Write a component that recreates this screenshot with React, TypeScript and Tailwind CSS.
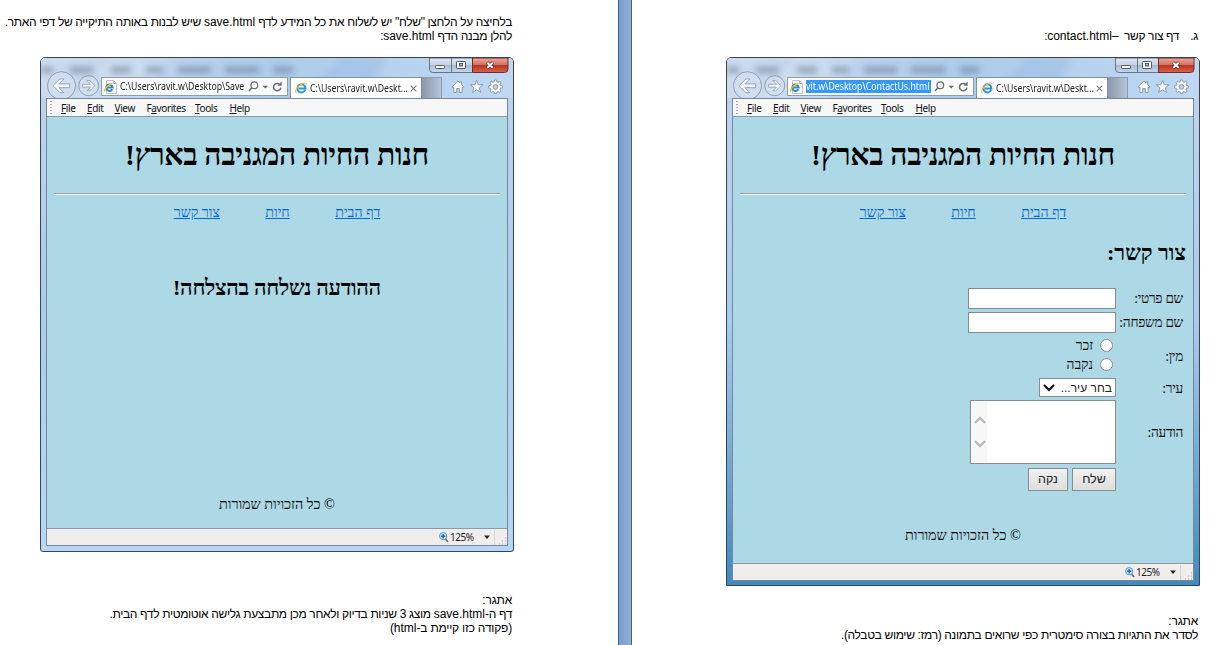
import type { ReactNode } from "react";

const ui = "font-['Noto_Sans','Open_Sans',sans-serif]";
const serif = "font-['Liberation_Serif',serif]";

function IeLogo({ size }: { size: number }) {
  return (
    <svg width={size} height={size} viewBox="0 0 16 16" className="shrink-0">
      <path d="M13.6 10.6A5.4 5.4 0 1 1 14 8.6H5.2" fill="none" stroke="#2593dc" strokeWidth="2.6" />
      <path d="M1.6 14.6C-.6 12.2 3 6.2 8.2 3 11.6.8 15.2.4 15 3.4" fill="none" stroke="#f2bd2c" strokeWidth="1.5" />
    </svg>
  );
}

function PageIcon() {
  return (
    <svg width="13" height="14" viewBox="0 0 13 14" className="shrink-0">
      <path d="M2.5.5h7l3 3v10h-10z" fill="#fff" stroke="#c2c2c2" />
      <path d="M9.5.5v3h3" fill="none" stroke="#b5b5b5" />
      <path d="M8.3 9.3A3.2 3.2 0 1 1 8.7 7.6H2.8" fill="none" stroke="#2089d8" strokeWidth="2" />
      <path d="M.8 11.5C0 9 3.5 5 8.5 3.8" fill="none" stroke="#f0b92a" strokeWidth="1.4" />
    </svg>
  );
}

function NavButtons() {
  return (
    <svg width="54" height="27" viewBox="0 0 54 27" className="shrink-0">
      <circle cx="15.5" cy="14.7" r="14" fill="#d5e2f2" fillOpacity=".55" stroke="#8f9db0" />
      <path d="M7 14.7l7-6.8h3.8l-4.9 5h10.8v3.8H12.9l4.9 5H14z" fill="#f5f9fd" stroke="#8f9db0" strokeWidth=".9" />
      <circle cx="42.7" cy="14.7" r="10" fill="#d5e2f2" fillOpacity=".55" stroke="#8f9db0" />
      <path d="M49 14.7l-5.3-5.2h-2.8l3.7 3.8h-8v2.8h8l-3.7 3.8h2.8z" fill="#f5f9fd" stroke="#8f9db0" strokeWidth=".8" />
    </svg>
  );
}

function AddressTools() {
  return (
    <svg width="36" height="16" viewBox="0 0 36 16" className="shrink-0">
      <g fill="none" stroke="#6b6b6b">
        <circle cx="6.3" cy="6.2" r="3.4" strokeWidth="1.2" />
        <path d="M3.8 8.8L1 12" strokeWidth="1.5" />
        <path d="M31.5 5.2A3.7 3.7 0 1 0 32.9 8.6" strokeWidth="1.5" />
      </g>
      <path d="M14.5 6.8h5.5l-2.7 2.8z" fill="#666" />
      <path d="M33.7 2.5v4.2h-4.2z" fill="#6b6b6b" />
    </svg>
  );
}

function ToolIcons() {
  return (
    <svg width="54" height="16" viewBox="0 0 54 16" className="shrink-0">
      <g fill="#fafcfe" stroke="#8292a8" strokeWidth=".9" strokeLinejoin="round">
        <path d="M1 8.1L7 2l2 2V2.6h1.7v3.1L13 8.1l-1 1-.9-.8V13.4H8.3V9.5H5.7v3.9H2.9V8.3l-.9.8z" />
        <path d="M25.6 1.3l1.7 4.4 4.6.2-3.6 2.9 1.3 4.6-4-2.6-4 2.6 1.3-4.6-3.6-2.9 4.6-.2z" />
        <path d="M43.5 1h2l.4 1.8 1.2.5 1.6-1 1.4 1.4-1 1.6.5 1.2 1.8.4v2l-1.8.4-.5 1.2 1 1.6-1.4 1.4-1.6-1-1.2.5-.4 1.6h-2l-.4-1.6-1.2-.5-1.6 1-1.4-1.4 1-1.6-.5-1.2-1.8-.4v-2l1.8-.4.5-1.2-1-1.6 1.4-1.4 1.6 1 1.2-.5z" />
        <circle cx="44.5" cy="7.9" r="2.4" fill="#b9cfe8" />
      </g>
    </svg>
  );
}

function CaptionButtons() {
  return (
    <svg width="80" height="15" viewBox="0 0 80 15" className="absolute top-0 right-[4px]">
      <defs>
        <linearGradient id="glass" x1="0" y1="0" x2="0" y2="1">
          <stop offset="0" stopColor="#dde7f2" />
          <stop offset=".48" stopColor="#c5d3e4" />
          <stop offset=".5" stopColor="#a9bbd1" />
          <stop offset="1" stopColor="#c7d8ea" />
        </linearGradient>
        <linearGradient id="red" x1="0" y1="0" x2="0" y2="1">
          <stop offset="0" stopColor="#eba89b" />
          <stop offset=".48" stopColor="#d4705e" />
          <stop offset=".5" stopColor="#b83222" />
          <stop offset="1" stopColor="#d5664c" />
        </linearGradient>
      </defs>
      <path d="M.5 0H43.5V14.5H4Q.5 14.5.5 11z" fill="url(#glass)" stroke="#65758b" />
      <path d="M43.5 0h35.500v11q0 3.500-3.500 3.500H43.500z" fill="url(#red)" stroke="#6c2d30" />
      <path d="M22.500 0v14" stroke="#65758b" />
      <rect x="6.500" y="7.500" width="9" height="3" rx=".8" fill="#fff" stroke="#4e5969" />
      <rect x="27.500" y="3.500" width="9" height="7" rx=".8" fill="#fff" stroke="#4e5969" />
      <rect x="30.500" y="5.500" width="3" height="2.500" fill="#aebdd0" stroke="#4e5969" />
      <path d="M58 4.500l6 5.500m0-5.500l-6 5.500" stroke="#5b3038" strokeWidth="3.600" />
      <path d="M58.300 4.800l5.400 4.900m0-4.900l-5.400 4.900" stroke="#fff" strokeWidth="2" />
    </svg>
  );
}

function Backdrop() {
  const marks = [[0, 12], [29, 23], [70, 20], [105, 17], [137, 33], [184, 34], [233, 19]];
  return (
    <svg width="472" height="40" className="absolute top-0 left-0">
      <path d="M300 0h46l-26 41h-60z" fill="#7da5d2" opacity=".22" className="blur-[3px]" />
      <path d="M70 0h60l-30 41H30z" fill="#fff" opacity=".15" className="blur-[3px]" />
      {marks.map(([x, w]) => (
        <rect key={x} x={x} y="9" width={w} height="6" fill="#55657c" opacity=".5" className="blur-[3px]" />
      ))}
    </svg>
  );
}

const menus = [
  ["", "F", "ile", "w-[26px]"],
  ["", "E", "dit", "w-[27.5px]"],
  ["", "V", "iew", "w-[32px]"],
  ["F", "a", "vorites", "w-[48.5px]"],
  ["", "T", "ools", "w-[34.5px]"],
  ["", "H", "elp", "w-[30px]"],
];

interface BrowserProps {
  address: string;
  selected?: boolean;
  children: ReactNode;
  frame: string;
}

function Browser({ address, selected, children, frame }: BrowserProps) {
  return (
    <div dir="ltr" className={`relative flex w-[474px] flex-col overflow-hidden rounded-t-[5px] border border-[#39424e] ${frame}`}>
      <div className="relative h-[40px] shrink-0 bg-linear-to-r from-[#ccdcee] via-[#adcbeb] to-[#c0d8f1]">
        <Backdrop />
        <CaptionButtons />
        <div className="relative flex h-full items-end pl-[5px]">
          <NavButtons />
          <div className="mb-[2px] ml-[1px] flex h-[19px] w-[187px] items-center border border-[#8e9db0] bg-[#fafcfe] pl-[2px]">
            <PageIcon />
            <span className={`${ui} ml-[3px] w-[125px] shrink-0 text-[10.5px] leading-[13px] whitespace-nowrap ${selected ? "bg-[#3399ff] text-white" : "text-[#222]"}`}>
              <span className={`inline-block w-max origin-left ${selected ? "scale-x-[0.835]" : "scale-x-[0.83]"}`}>{address}</span>
            </span>
            <span className="ml-[3px]"><AddressTools /></span>
          </div>
          <div className="ml-[2px] flex h-[21px] w-[132px] items-center border-x border-t border-[#8090a5] bg-white pl-[4px]">
            <IeLogo size={12} />
            <span className={`${ui} ml-[3px] w-[98px] shrink-0 text-[10.5px] leading-[13px] whitespace-nowrap text-[#222]`}>
              <span className="inline-block w-max origin-left scale-x-[0.825]">C:\Users\ravit.w\Deskt...</span>
            </span>
            <svg width="7" height="7" viewBox="0 0 7 7" className="ml-[2px] shrink-0">
              <path d="M.7.7l5.600 5.600m0-5.600L.7 6.300" stroke="#777" strokeWidth="1.100" />
            </svg>
          </div>
          <div className="h-[21px] w-[20px] border-t border-r border-[#8b9cb2] bg-linear-to-r from-[#8998aa] to-[#b5c5d6]" />
          <div className="mb-[3px] ml-[9px] flex"><ToolIcons /></div>
        </div>
      </div>
      <div className="mx-[5px] flex min-h-0 flex-1 flex-col border border-[#77889a]">
        <div className={`${ui} flex h-[18px] shrink-0 items-center border-b border-[#8a9aa5] bg-[#f7f7f7] pl-[3px] text-[10px] leading-[14px] text-[#111]`}>
          <svg width="2" height="13" className="mr-[9px]"><path d="M1 0v13" stroke="#aaa" strokeWidth="2" strokeDasharray="1 2" /></svg>
          <div className="flex tracking-[-0.38px]">
            {menus.map(([a, key, b, w]) => (
              <span key={key} className={`${w} whitespace-nowrap`}>
                {a}<u className="underline-offset-1">{key}</u>{b}
              </span>
            ))}
          </div>
        </div>
        <div dir="rtl" className={`${serif} flex min-h-0 flex-1 flex-col bg-[#add8e6] px-[7px] text-[14px] text-black`}>
          <div className="h-[77px] shrink-0 border-b border-[#a0a0a0] pt-[19px] text-center text-[30px] leading-[38px] font-bold tracking-[-0.39px] whitespace-nowrap shadow-[0_1px_0_#f3f3f3]">
            חנות החיות המגניבה בארץ!
          </div>
          <div className="flex h-[36px] shrink-0 items-center justify-center gap-[45.5px] text-[14.2px] text-[#0066cc] underline">
            <span>דף הבית</span><span>חיות</span><span>צור קשר</span>
          </div>
          {children}
        </div>
        <div className={`${ui} flex h-[17px] shrink-0 items-center justify-end border-t border-[#8b9aa3] bg-[#f1eded] text-[10.5px] text-[#222]`}>
          <svg width="10" height="11" viewBox="0 0 10 11" className="mr-px">
            <path d="M6.500 7l2.500 3" stroke="#9b6138" strokeWidth="1.800" />
            <circle cx="4.200" cy="4.200" r="3.600" fill="#d7efff" stroke="#4a94cc" />
            <path d="M2 4.200h4.400M4.200 2v4.400" stroke="#1465bd" strokeWidth="1.400" />
          </svg>
          <span className="w-[24px] text-[10px] tracking-[-0.5px]">125%</span>
          <svg width="33" height="16" viewBox="0 0 33 16">
            <path d="M10 6.500h6l-3 3.500z" fill="#222" />
            <path d="M20.500 1v15" stroke="#d8d4d4" />
            <path d="M31 9h1M28 12h1m2 0h1M25 15h1m2 0h1m2 0h1" stroke="#aaa" />
          </svg>
        </div>
      </div>
      <div className={selected ? "h-[4px] shrink-0" : "h-[5px] shrink-0"} />
    </div>
  );
}

function Row({ label, height, children }: { label: string; height: string; children: ReactNode }) {
  return (
    <div className={`flex ${height} shrink-0 items-center`}>
      <div className="w-[67px] shrink-0 pt-[2px] text-[13.6px] tracking-[-0.25px] whitespace-nowrap">{label}</div>
      {children}
    </div>
  );
}

function ContactForm() {
  return (
    <div className="flex flex-col pr-[3px]">
      <Row label="שם פרטי:" height="h-[24px]"><div className="h-[21px] w-[148px] border border-[#858d94] bg-white" /></Row>
      <Row label="שם משפחה:" height="h-[24px]"><div className="h-[21px] w-[148px] border border-[#858d94] bg-white" /></Row>
      <Row label="מין:" height="h-[43px]">
        <div className="flex flex-col pr-[3px] pb-[2px]">
          {["זכר", "נקבה"].map((name) => (
            <div key={name} className="flex h-[19px] items-center gap-[7px]">
              <div className="size-[13px] rounded-full border border-[#858d94] bg-white" />
              <span className="pt-[2px] text-[13.8px]">{name}</span>
            </div>
          ))}
        </div>
      </Row>
      <Row label="עיר:" height="h-[21px]">
        <div className="flex h-[19px] w-[77px] items-center justify-between border border-[#858d94] bg-white px-[3px] font-['Liberation_Sans',sans-serif] text-[12px] text-[#222]">
          <span className="whitespace-nowrap">בחר עיר...</span>
          <svg width="12" height="8" viewBox="0 0 12 8"><path d="M1 1l5 5 5-5" fill="none" stroke="#111" strokeWidth="2.200" /></svg>
        </div>
      </Row>
      <Row label="הודעה:" height="h-[68px]">
        <div className="flex h-[64px] w-[146px] justify-end border border-[#858d94] bg-white">
          <div className="m-[1px] flex w-[15px] flex-col items-center gap-[14px] bg-[#f7f7f7] pt-[14px]">
            <svg width="12" height="9" viewBox="0 0 12 9"><path d="M1 7l5-5 5 5" fill="none" stroke="#bababa" strokeWidth="2.400" /></svg>
            <svg width="12" height="9" viewBox="0 0 12 9"><path d="M1 2l5 5 5-5" fill="none" stroke="#bababa" strokeWidth="2.400" /></svg>
          </div>
        </div>
      </Row>
      <div className="mt-px flex h-[24px] items-center gap-[4px] pr-[67px] font-['Liberation_Sans',sans-serif] text-[12.5px] text-[#222]">
        <div className="flex h-[23px] w-[44px] items-center justify-center border border-[#8c8c8c] bg-linear-to-b from-[#f1f1f1] to-[#dedede]">שלח</div>
        <div className="flex h-[23px] w-[40px] items-center justify-center border border-[#8c8c8c] bg-linear-to-b from-[#f1f1f1] to-[#dedede]">נקה</div>
      </div>
    </div>
  );
}

function Latin({ children }: { children: string }) {
  return <span className="tracking-normal">{children}</span>;
}

const footer = "© כל הזכויות שמורות";

export default function App() {
  return (
    <div dir="ltr" className="flex h-[645px] w-[1231px] overflow-hidden bg-white font-['Liberation_Sans',sans-serif] text-[12px] leading-[14px] text-black">
      <div className="flex w-[618px] shrink-0 flex-col pt-[15px] pl-[6px]">
        <div dir="rtl" className="h-[42px] w-[506px] tracking-[-0.34px] whitespace-nowrap">
          <p>בלחיצה על הלחצן "שלח" יש לשלוח את כל המידע לדף <Latin>save.html</Latin> שיש לבנות באותה התיקייה של דפי האתר.</p>
          <p>להלן מבנה הדף <Latin>save.html</Latin>:</p>
        </div>
        <div className="ml-[34px] flex h-[495px]">
          <Browser address="C:\Users\ravit.w\Desktop\Save" frame="bg-linear-to-b from-[#bfd5ef] via-[#a9cbed] to-[#b5d7f8] rounded-b-[3px]">
            <div className="pt-[44px] text-center text-[22px] leading-[28px] font-bold tracking-[-0.33px] whitespace-nowrap">ההודעה נשלחה בהצלחה!</div>
            <div className="mt-auto mb-[15px] text-center text-[14.3px] leading-[18px]">{footer}</div>
          </Browser>
        </div>
        <div dir="rtl" className="mt-[41px] w-[506px] whitespace-nowrap">
          <p className="tracking-[-0.2px]">אתגר:</p>
          <p className="tracking-[-0.34px]">דף ה-<Latin>save.html</Latin> מוצג 3 שניות בדיוק ולאחר מכן מתבצעת גלישה אוטומטית לדף הבית.</p>
          <p className="tracking-[-0.21px]">(פקודה כזו קיימת ב-<Latin>html</Latin>)</p>
        </div>
      </div>
      <div className="w-[14px] shrink-0 border-x border-[#4b6079] bg-linear-to-r from-[#789cc9] to-[#91afd6]" />
      <div className="flex w-[599px] shrink-0 flex-col pt-[29px]">
        <div dir="rtl" className="flex h-[28px] pr-[33px] tracking-[-0.38px] whitespace-nowrap">
          <span className="w-[19px]">ג.</span>
          <span className="whitespace-pre">דף צור קשר  –<Latin>contact.html</Latin>:</span>
        </div>
        <div className="ml-[94px] flex h-[529px]">
          <Browser selected address="vit.w\Desktop\ContactUs.html" frame="bg-linear-to-b from-[#bfd5ef] via-[#a9cbed] to-[#3f8ac0]">
            <div className="h-[56px] shrink-0 pt-[9px] text-[22px] leading-[28px] font-bold">צור קשר:</div>
            <ContactForm />
            <div className="mt-auto mb-[19px] text-center text-[14.3px] leading-[18px]">{footer}</div>
          </Browser>
        </div>
        <div dir="rtl" className="mt-[28px] pr-[33px] whitespace-nowrap">
          <p className="tracking-[-0.2px]">אתגר:</p>
          <p className="tracking-[-0.34px]">לסדר את התגיות בצורה סימטרית כפי שרואים בתמונה (רמז: שימוש בטבלה).</p>
        </div>
      </div>
    </div>
  );
}
